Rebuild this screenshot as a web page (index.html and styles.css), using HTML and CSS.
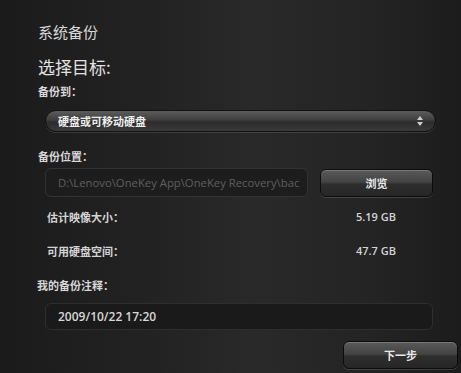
FILE: index.html
```html
<!DOCTYPE html>
<html lang="zh-CN">
<head>
    <meta charset="UTF-8">
    <title>系统备份</title>
    <link rel="stylesheet" href="styles.css">
</head>
<body>
    <div class="backup-page">
        <h1 class="page-title">系统备份</h1>
        <h2 class="section-title">选择目标:</h2>

        <div class="field-label">备份到：</div>
        <div class="select-box">
            <span>硬盘或可移动硬盘</span>
            <svg class="select-arrows" width="10" height="12" viewBox="0 0 10 12">
                <path d="M5 1 L8 5 L2 5 Z" fill="#cfcfcf"/>
                <path d="M5 11 L8 7 L2 7 Z" fill="#cfcfcf"/>
            </svg>
        </div>

        <div class="field-label location-label">备份位置：</div>
        <div class="location-row">
            <div class="text-input path-input">D:\Lenovo\OneKey App\OneKey Recovery\bac</div>
            <button class="gloss-btn browse-btn">浏览</button>
        </div>

        <div class="stat-row first-stat">
            <span>估计映像大小：</span>
            <span class="stat-value">5.19 GB</span>
        </div>
        <div class="stat-row">
            <span>可用硬盘空间：</span>
            <span class="stat-value">47.7 GB</span>
        </div>

        <div class="field-label note-label">我的备份注释：</div>
        <div class="text-input note-input">2009/10/22 17:20</div>

        <button class="gloss-btn next-btn">下一步</button>
    </div>
</body>
</html>
```

FILE: styles.css
```css
html, body {
    height: 100%;
}
body {
    margin: 0;
    font-family: 'Noto Sans CJK SC', 'Open Sans', sans-serif;
    color: #dcdcdc;
    background: linear-gradient(90deg, #1b1b1b 0%, #232323 35%, #292929 55%, #242424 80%, #1c1c1c 100%);
    overflow: hidden;
}
.backup-page {
    padding: 22px 0 0 38px;
    display: flex;
    flex-direction: column;
    align-items: flex-start;
}
.page-title {
    margin: 0;
    font-size: 15px;
    line-height: 20px;
    font-weight: normal;
    color: #d8d8d8;
}
.section-title {
    margin: 14px 0 0;
    font-size: 17px;
    line-height: 22px;
    font-weight: normal;
    color: #e2e2e2;
}
.field-label {
    margin-top: 6px;
    font-size: 11px;
    line-height: 14px;
    font-weight: bold;
    color: #d8d8d8;
}
.select-box {
    margin: 12px 0 0 7px;
    width: 391px;
    height: 22px;
    box-sizing: border-box;
    padding: 0 10px 0 12px;
    border-radius: 11px;
    border: 1px solid #111;
    background: linear-gradient(#5c5c5c 0%, #3e3e3e 45%, #2c2c2c 55%, #3a3a3a 100%);
    box-shadow: 0 1px 0 rgba(255, 255, 255, 0.12);
    display: flex;
    align-items: center;
    justify-content: space-between;
    font-size: 11px;
    font-weight: bold;
    color: #eee;
}
.location-label {
    margin-top: 17px;
}
.location-row {
    margin: 5px 0 0 7px;
    display: flex;
    align-items: flex-start;
    gap: 12px;
}
.text-input {
    box-sizing: border-box;
    border-radius: 6px;
    border: 1px solid #333;
    background: #1d1d1d;
    display: flex;
    align-items: center;
    white-space: nowrap;
    overflow: hidden;
}
.path-input {
    width: 263px;
    height: 29px;
    padding-left: 12px;
    font-family: 'Open Sans', sans-serif;
    font-size: 11.3px;
    color: #5f5f5f;
}
.gloss-btn {
    box-sizing: border-box;
    height: 28px;
    border-radius: 6px;
    border: 1px solid #0c0c0c;
    background: linear-gradient(#5a5a5a 0%, #444 45%, #2e2e2e 55%, #262626 100%);
    box-shadow: inset 0 1px 0 rgba(255, 255, 255, 0.2), 0 1px 0 rgba(255, 255, 255, 0.15);
    font-family: 'Noto Sans CJK SC', sans-serif;
    font-size: 11px;
    font-weight: bold;
    color: #e8e8e8;
    padding: 0;
}
.browse-btn {
    margin-top: 1px;
    width: 113px;
}
.stat-row {
    margin: 20px 0 0 9px;
    width: 349px;
    display: flex;
    justify-content: space-between;
    font-size: 11px;
    line-height: 14px;
    font-weight: bold;
    color: #d4d4d4;
}
.first-stat {
    margin-top: 13px;
}
.stat-value {
    font-family: 'Open Sans', sans-serif;
    font-size: 11px;
    font-weight: 600;
}
.note-label {
    margin: 20px 0 0 -1px;
}
.note-input {
    margin: 11px 0 0 7px;
    width: 388px;
    height: 27px;
    padding-left: 12px;
    font-family: 'Open Sans', sans-serif;
    font-size: 12px;
    font-weight: 600;
    color: #d8d8d8;
    border-color: #2e2e2e;
    background: #1a1a1a;
}
.next-btn {
    margin: 11px 0 0 305px;
    width: 115px;
}
```
